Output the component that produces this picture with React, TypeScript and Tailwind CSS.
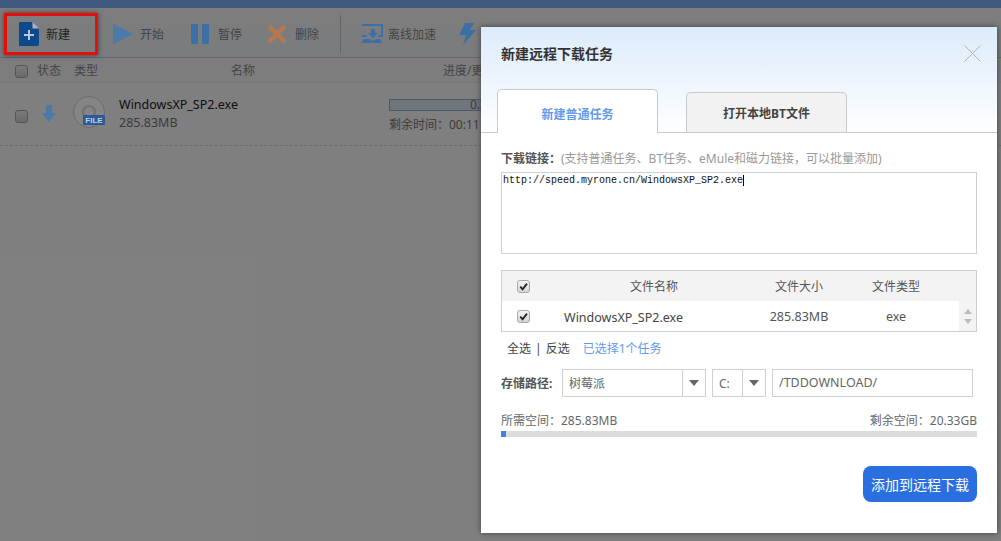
import React from 'react';

const Check = ({ checked = false }: { checked?: boolean }) => (
  <span className="flex h-[13px] w-[13px] shrink-0 items-center justify-center rounded-[3px] border border-[#a8a8a8] bg-gradient-to-b from-[#f4f4f4] to-[#d4d4d4]">
    {checked && (
      <svg viewBox="0 0 12 12" className="h-[11px] w-[11px]">
        <path d="M2.5 6.2 5 9 9.8 2.8" fill="none" stroke="#222" strokeWidth="2" />
      </svg>
    )}
  </span>
);

const ToolItem = ({ icon, label, className }: { icon: React.ReactNode; label: string; className: string }) => (
  <div className={`flex items-center ${className}`}>
    {icon}
    <span className="pt-px text-xs text-[#8a8a8a]">{label}</span>
  </div>
);

const Caret = () => (
  <svg viewBox="0 0 10 6" className="h-[6px] w-[10px]">
    <path d="M0 0h10L5 6z" fill="#666" />
  </svg>
);

export default function App() {
  return (
    <div className="relative h-[541px] w-[1001px] overflow-hidden bg-white font-['Noto_Sans','Noto_Sans_CJK_SC',sans-serif] text-[#333]">
      {/* Page behind the dialog */}
      <div className="h-2 bg-[#7db5fd]" />
      <div className="flex h-[50px] items-center border-b border-[#c5d3e6] bg-gradient-to-b from-[#fbfbfb] to-[#f4f7fc] pl-[19px] pt-[3px]">
        <ToolItem
          className="w-[94px]"
          label=""
          icon={
            <svg viewBox="0 0 20 24" className="relative z-10 mr-[7px] h-6 w-5">
              <path d="M1 0h12l7 7v15a2 2 0 0 1-2 2H1a1 1 0 0 1-1-1V1a1 1 0 0 1 1-1z" fill="#0c4a8c" />
              <path d="M13.5 0 20 6.5h-6.5z" fill="#a8b4c4" />
              <path d="M10 8v10M5 13h10" stroke="#b8c8dc" strokeWidth="2" />
            </svg>
          }
        />
        <ToolItem
          className="w-[78px]"
          label="开始"
          icon={
            <svg viewBox="0 0 20 20" className="relative z-10 mr-[7px] h-5 w-5">
              <path d="M0 0l20 10L0 20z" fill="#4a7aa8" />
            </svg>
          }
        />
        <ToolItem
          className="w-[76px]"
          label="暂停"
          icon={
            <svg viewBox="0 0 18 20" className="relative z-10 mr-[9px] h-5 w-[18px]">
              <path d="M0 0h7v20H0zM11 0h7v20h-7z" fill="#3c6fa6" />
            </svg>
          }
        />
        <ToolItem
          className="w-[73px]"
          label="删除"
          icon={
            <svg viewBox="0 0 20 20" className="relative z-10 mr-2 h-5 w-5">
              <path d="M2 2l16 16M18 2 2 18" stroke="#b5784f" strokeWidth="4.5" />
            </svg>
          }
        />
        <div className="mr-5 h-[38px] w-px bg-[#c8ccd2]" />
        <ToolItem
          className="w-[97px]"
          label="离线加速"
          icon={
            <svg viewBox="0 0 22 20" className="relative z-10 mr-[5px] h-5 w-[22px]">
              <path d="M1 1h20v11h-4M6 12H1z" fill="none" stroke="#3c6fa6" strokeWidth="2" />
              <path d="M10 5h4v4h3l-5 5-5-5h3z" fill="#3c6fa6" />
              <path d="M3 15h6l3 2 3-2h4l2 4H0z" fill="#3c6fa6" />
            </svg>
          }
        />
        <svg viewBox="0 0 18 22" className="relative z-10 h-[22px] w-[18px]">
          <path d="M7 0h9l-4 7h6L5 22l3-10H1z" fill="#3c6fa6" />
        </svg>
      </div>

      <div className="flex h-[25px] items-center border-b border-[#eeeeee] bg-[#fafafa] pl-[15px] pt-[2px] text-xs text-[#8a8a8a]">
        <Check />
        <span className="ml-[9px] w-[37px]">状态</span>
        <span className="w-[157px]">类型</span>
        <span className="w-[212px]">名称</span>
        <span className="whitespace-nowrap">进度/更</span>
      </div>

      <div className="flex h-[63px] border-b border-dashed border-[#d8d8d8] pl-[15px]">
        <div className="mt-[27px]"><Check /></div>
        <svg viewBox="0 0 14 17" className="relative z-10 ml-[14px] mt-[22px] h-[17px] w-[14px]">
          <path d="M4 0h6v8h4l-7 9-7-9h4z" fill="#4a7aa8" />
        </svg>
        <svg viewBox="0 0 32 32" className="relative z-10 ml-[17px] mt-[13px] h-8 w-8">
          <circle cx="16" cy="16" r="15.5" fill="#858585" stroke="#6c6c6c" />
          <circle cx="16" cy="16" r="6" fill="none" stroke="#747474" strokeWidth="2.5" />
          <rect x="10" y="19" width="22" height="10" rx="1" fill="#2c5a96" />
          <text x="21" y="27" fontSize="8" fontWeight="700" textAnchor="middle" fill="#c4d0de" fontFamily="Liberation Sans, sans-serif">FILE</text>
        </svg>
        <div className="ml-[14px] mt-[13px] w-[270px] text-[12.5px] leading-[18px]">
          <div className="text-[#222]">WindowsXP_SP2.exe</div>
          <div className="text-[#777]">285.83MB</div>
        </div>
        <div className="mt-[16px] w-[92px] whitespace-nowrap text-xs text-[#777]">
          <div className="h-3 border border-r-0 border-[#8db3e2] bg-[#e3ecf7] pl-[80px] leading-[10px]">0.2</div>
          <div className="mt-[6px]">剩余时间：00:11</div>
        </div>
      </div>

      {/* Dim layer */}
      <div className="absolute inset-0 bg-black/50" />

      {/* Callout around the new-task button */}
      <div className="absolute left-[4px] top-[13px] flex h-[42px] w-[94px] items-center border-[3px] border-[#e60d0d] pl-[39px] pt-px text-xs text-[#222] shadow-[0_0_5px_rgba(0,0,0,0.5)]">
        新建
      </div>

      {/* Dialog */}
      <div className="absolute left-[481px] top-[27px] z-20 h-[506px] w-[516px] bg-white shadow-[0_0_6px_rgba(0,0,0,0.5)]">
        <div className="h-[106px] bg-gradient-to-b from-[#dcebfb] to-white">
          <div className="flex items-center justify-between pl-5 pr-4 pt-4">
            <h1 className="text-sm font-bold leading-[21px] text-[#333]">新建远程下载任务</h1>
            <svg viewBox="0 0 17 17" className="h-[17px] w-[17px]">
              <path d="M.5.5l16 16M16.5.5l-16 16" stroke="#b4b4b4" strokeWidth="1" />
            </svg>
          </div>
          <div className="mt-4 flex h-[53px] items-end border-b border-[#c9c9c9] pl-4">
            <div className="relative top-px flex h-[44px] w-[161px] items-center justify-center rounded-t-[5px] border border-b-0 border-[#c9c9c9] bg-white pt-[6px] text-xs font-bold text-[#5f9bea]">
              新建普通任务
            </div>
            <div className="ml-[28px] flex h-[40px] w-[161px] items-center justify-center rounded-t-[5px] border border-b-0 border-[#c9c9c9] bg-[#f2f2f2] pt-[3px] text-xs font-bold text-[#444]">
              打开本地BT文件
            </div>
          </div>
        </div>

        <div className="px-5">
          <p className="pt-[17px] text-xs leading-[18px] text-[#999]">
            <b className="text-[#555]">下载链接：</b>(支持普通任务、BT任务、eMule和磁力链接，可以批量添加)
          </p>
          <div className="mt-[4px] h-[82px] border border-[#cfcfcf] pl-[1px] pt-[2px] font-['Liberation_Mono',monospace] text-[10px] leading-[12px] text-[#111]">
            http://speed.myrone.cn/WindowsXP_SP2.exe<span className="border-l border-black" />
          </div>

          <div className="mt-4 h-[62px] border border-[#cfcfcf] text-xs text-[#555]">
            <div className="flex h-[30px] items-center bg-[#f3f3f3] pl-[15px]">
              <Check checked />
              <span className="w-[220px] pl-[28px] pt-px text-center">文件名称</span>
              <span className="w-[98px] pt-px text-center">文件大小</span>
              <span className="w-[96px] pt-px text-center">文件类型</span>
            </div>
            <div className="flex h-[30px] items-center pl-[15px] text-[12.5px]">
              <Check checked />
              <span className="w-[220px] pl-[34px] pt-[4px] text-[#444]">WindowsXP_SP2.exe</span>
              <span className="w-[98px] pt-[2px] text-center">285.83MB</span>
              <span className="w-[96px] pt-[2px] text-center">exe</span>
              <div className="ml-auto flex h-full w-[17px] flex-col items-center justify-center gap-[5px] bg-[#f3f3f3]">
                <span className="h-0 w-0 border-x-4 border-b-[5px] border-x-transparent border-b-[#bbb]" />
                <span className="h-0 w-0 border-x-4 border-t-[5px] border-x-transparent border-t-[#bbb]" />
              </div>
            </div>
          </div>

          <div className="mt-2 flex h-[18px] items-center pl-[6px] text-xs leading-[18px] text-[#444]">
            全选<span className="mx-1">|</span>反选
            <span className="ml-[13px] text-[#5f9bea]">已选择1个任务</span>
          </div>

          <div className="mt-[11px] flex h-7 items-center text-xs">
            <b className="w-[61px] pt-px text-[#555]">存储路径:</b>
            <div className="flex h-7 w-[144px] items-center border border-[#cfcfcf] text-[#666]">
              <span className="flex-1 pl-[6px] pt-px">树莓派</span>
              <span className="flex h-full w-[23px] items-center justify-center border-l border-[#cfcfcf]"><Caret /></span>
            </div>
            <div className="ml-[6px] flex h-7 w-[54px] items-center border border-[#cfcfcf] text-[#666]">
              <span className="flex-1 pl-[6px] pt-px">C:</span>
              <span className="flex h-full w-[23px] items-center justify-center border-l border-[#cfcfcf]"><Caret /></span>
            </div>
            <div className="ml-[6px] flex h-7 w-[201px] items-center border border-[#cfcfcf] pl-[6px] pt-px text-[12.5px] text-[#666]">/TDDOWNLOAD/</div>
          </div>

          <div className="mt-[15px] flex justify-between text-xs leading-[18px] text-[#666]">
            <span>所需空间：285.83MB</span>
            <span>剩余空间：20.33GB</span>
          </div>
          <div className="mt-px h-[6px] w-full bg-[#dcdcdc]">
            <div className="h-full w-[5px] bg-[#3f7fe8]" />
          </div>

          <div className="mt-[29px] flex justify-end">
            <button className="h-9 w-[114px] rounded-lg bg-[#2a6fe0] pt-[2px] text-sm text-white">添加到远程下载</button>
          </div>
        </div>
      </div>
    </div>
  );
}
